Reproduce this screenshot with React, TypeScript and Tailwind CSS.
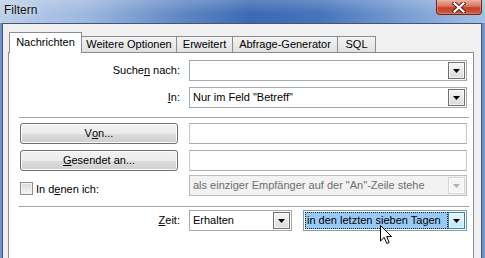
import React from "react";

const ui = "font-['Liberation_Sans',Arial,sans-serif] text-[11px] text-black";

function DownArrow({ color = "#000" }: { color?: string }) {
  return (
    <svg width="7" height="4" viewBox="0 0 7 4">
      <path d="M0 0H7L3.5 4Z" fill={color} />
    </svg>
  );
}

type DropState = "normal" | "disabled" | "hot";

function DropButton({ state = "normal" }: { state?: DropState }) {
  const styles: Record<DropState, string> = {
    normal: "border-[#707070] bg-[linear-gradient(to_bottom,#f6f6f6,#dadada)]",
    disabled: "border-[#d2d5da] bg-[#f4f4f4]",
    hot: "border-[#3c7fb1] bg-[linear-gradient(to_bottom,#eaf6fd,#bee6fd)]",
  };
  return (
    <div
      className={`w-[17px] h-[17px] border shrink-0 flex items-center justify-center shadow-[inset_0_0_0_1px_#ffffff99] ${styles[state]}`}
    >
      <DownArrow color={state === "disabled" ? "#b0b0b0" : "#000"} />
    </div>
  );
}

function Combo({ text, className = "" }: { text?: string; className?: string }) {
  return (
    <div
      className={`h-[21px] border border-[#a5a9b1] bg-white flex items-center pl-[3px] pr-[1px] ${className}`}
    >
      <span className="flex-1 truncate">{text}</span>
      <DropButton />
    </div>
  );
}

function TextBox() {
  return <div className="h-[21px] w-[278px] border border-[#abadb3] border-l-[#c8cbd1] border-r-[#c8cbd1] bg-white" />;
}

function PushButton({ children }: { children: React.ReactNode }) {
  return (
    <div className="w-[158px] h-[21px] rounded-[3px] border border-[#707070] bg-[linear-gradient(to_bottom,#f2f2f2_0%,#ebebeb_50%,#dddddd_51%,#cfcfcf_100%)] shadow-[inset_0_0_0_1px_#fbfbfb] flex items-center justify-center">
      {children}
    </div>
  );
}

function Separator({ className = "" }: { className?: string }) {
  return <div className={`h-px ml-[-1px] mr-[4px] bg-[#a0a0a0] ${className}`} />;
}

const tabs = [
  { label: "Weitere Optionen", w: "w-[95px]" },
  { label: "Erweitert", w: "w-[56px]" },
  { label: "Abfrage-Generator", w: "w-[105px]" },
  { label: "SQL", w: "w-[38px]" },
];

export default function App() {
  return (
    <div className={`relative w-[485px] h-[258px] overflow-hidden flex flex-col bg-[#6f93cc] ${ui}`}>
      {/* Titelleiste */}
      <div className="h-[23px] shrink-0 flex items-start bg-[linear-gradient(to_bottom,#ffffff30,#ffffff00_60%),linear-gradient(to_right,#bccfe9_0%,#9db7de_18%,#5d85c3_38%,#3b69b2_52%,#4674ba_66%,#7a9ed3_84%,#a5bfe4_100%)]">
        <span className="pl-[4px] pt-[3px] text-[12px] leading-[15px] text-[#111] [text-shadow:0_0_6px_#ffffffcc]">
          Filtern
        </span>
        <div className="ml-auto mr-[3px] w-[46px] h-[15px] rounded-b-[4px] border border-t-0 border-[#6e2418] bg-[linear-gradient(to_bottom,#eab0a2_0%,#d9735d_45%,#c2412a_55%,#cf5a40_100%)] shadow-[inset_0_0_0_1px_#f0b4a666] flex items-center justify-center">
          <svg width="14" height="11" viewBox="0 0 14 11">
            <path d="M2.5 1.5L11.5 9.5M11.5 1.5L2.5 9.5" stroke="#5a1a10" strokeWidth="4" strokeLinecap="square" />
            <path d="M2.5 1.5L11.5 9.5M11.5 1.5L2.5 9.5" stroke="#ffffff" strokeWidth="2.2" strokeLinecap="square" />
          </svg>
        </div>
      </div>

      {/* Fensterinhalt */}
      <div className="flex-1 flex ml-[2px] mr-[3px]">
        <div className="flex-1 flex flex-col bg-[#f0f0f0] border border-b-0 border-[#43557a] pl-[5px] pr-[7px] pt-[8px]">
          {/* Tabs */}
          <div className="relative z-10 -mb-px flex items-end h-[21px] pl-[1px]">
            <div className="w-[73px] h-[21px] bg-white border border-b-0 border-[#898c95] flex items-center justify-center pb-[1px]">
              Nachrichten
            </div>
            {tabs.map((t) => (
              <div
                key={t.label}
                className={`${t.w} h-[17px] border border-l-0 border-[#898c95] bg-[linear-gradient(to_bottom,#f3f3f3,#e0e0e0)] flex items-center justify-center`}
              >
                {t.label}
              </div>
            ))}
          </div>

          {/* Panel */}
          <div className="flex-1 bg-white border border-b-0 border-[#898c95] pl-[11px] pt-[7px]">
            <div className="flex items-center">
              <div className="w-[160px] text-right">
                Suche<u>n</u> nach:
              </div>
              <Combo className="ml-[9px] w-[278px]" />
            </div>
            <div className="flex items-center mt-[6px]">
              <div className="w-[160px] text-right">
                <u>I</u>n:
              </div>
              <Combo className="ml-[9px] w-[278px]" text={'Nur im Feld "Betreff"'} />
            </div>

            <Separator className="mt-[9px]" />

            <div className="flex items-center mt-[5px]">
              <PushButton>
                V<u>o</u>n...
              </PushButton>
              <div className="ml-[11px]">
                <TextBox />
              </div>
            </div>
            <div className="flex items-center mt-[6px]">
              <PushButton>
                <u>G</u>esendet an...
              </PushButton>
              <div className="ml-[11px]">
                <TextBox />
              </div>
            </div>
            <div className="flex mt-[4px]">
              <div className="w-[160px] flex items-center gap-[3px] self-end mb-[-1px]">
                <div className="w-[13px] h-[13px] border border-[#8f8f8f] bg-[linear-gradient(to_bottom,#d9d9d9,#f7f7f7)] shadow-[inset_0_0_0_1px_#f4f4f4]" />
                <span>
                  In d<u>e</u>nen ich:
                </span>
              </div>
              <div className="ml-[9px] w-[278px] h-[21px] border border-[#b8bcc2] bg-[#f2f2f2] flex items-center pl-[3px] pr-[1px] text-[#6d6d6d]">
                <span className="flex-1 truncate">als einziger Empfänger auf der "An"-Zeile stehe</span>
                <DropButton state="disabled" />
              </div>
            </div>

            <Separator className="mt-[10px]" />

            <div className="flex items-center mt-[3px]">
              <div className="w-[160px] text-right">
                <u>Z</u>eit:
              </div>
              <Combo className="ml-[9px] w-[103px]" text="Erhalten" />
              <div className="ml-[11px] w-[164px] h-[21px] border border-[#7f9db9] bg-white flex items-center pl-[1px] pr-[1px]">
                <span className="flex-1 h-[17px] leading-[15px] bg-[#99c9f6] border border-dotted border-[#1a1a1a] pl-[1px] truncate">
                  in den letzten sieben Tagen
                </span>
                <DropButton state="hot" />
              </div>
            </div>
          </div>
        </div>
      </div>

      {/* Mauszeiger */}
      <svg className="absolute left-[380px] top-[225px]" width="13" height="20" viewBox="0 0 13 20">
        <path d="M0.5 0.5V16L4.2 12.4L6.8 18.5L9.2 17.5L6.7 11.6H11.6Z" fill="#fff" stroke="#000" strokeWidth="1" strokeLinejoin="miter" />
      </svg>
    </div>
  );
}
